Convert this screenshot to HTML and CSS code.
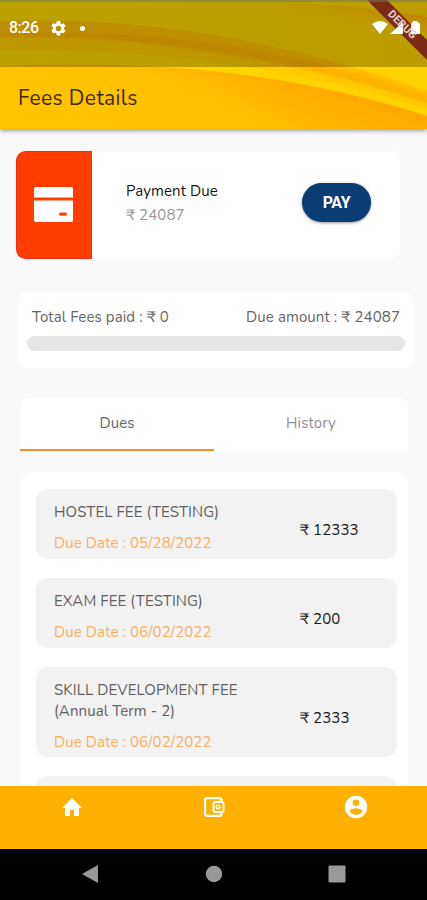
FILE: index.html
```html
<!DOCTYPE html>
<html lang="en">
<head>
<meta charset="utf-8">
<title>Fees Details</title>
<link rel="stylesheet" href="styles.css">
</head>
<body>
<div class="screen">
  <header class="header">
    <svg class="waves" viewBox="0 0 427 129" preserveAspectRatio="none">
      <defs>
        <linearGradient id="base" x1="0" y1="0" x2="1" y2="0"><stop offset="0" stop-color="#fbd800"/><stop offset="1" stop-color="#ffd200"/></linearGradient>
        <linearGradient id="low" x1="340" y1="86" x2="318" y2="145" gradientUnits="userSpaceOnUse"><stop offset="0" stop-color="#ffa800"/><stop offset="1" stop-color="#ffc000"/></linearGradient>
        <linearGradient id="low-left" x1="0" y1="0" x2="300" y2="0" gradientUnits="userSpaceOnUse"><stop offset="0" stop-color="#ffc400"/><stop offset="1" stop-color="#ffc400" stop-opacity="0"/></linearGradient>
        <linearGradient id="top" x1="360" y1="2" x2="355" y2="26" gradientUnits="userSpaceOnUse"><stop offset="0" stop-color="#ffb000"/><stop offset="1" stop-color="#ffd200" stop-opacity="0"/></linearGradient>
      </defs>
      <rect width="427" height="129" fill="url(#base)"/>
      <path d="M190 0Q330 0 427 17V36Q330 12 190 0Z" fill="url(#top)"/>
      <path d="M0 34Q110 32 214 48Q320 64 427 101V109Q320 76 214 62Q110 48 0 50Z" fill="#ffcb00"/>
      <path d="M0 21Q110 18 214 35Q320 53 427 91V104Q320 69 214 54Q110 36 0 38Z" fill="#ffbe00"/>
      <path d="M0 33Q110 29 214 44Q320 58 427 96V103Q320 67 214 51Q110 35 0 36Z" fill="#ffb400"/>
      <path d="M0 66Q105 61 213 71Q330 84 427 116V129H0Z" fill="url(#low)"/>
      <path d="M0 70Q105 65 213 75Q260 80 300 88V129H0Z" fill="url(#low-left)"/>
    </svg>
    <div class="debug"><span class="ribbon"></span></div>
    <div class="status">
      <span class="clock">8:26</span>
      <svg class="gear" viewBox="2 2 20 20"><path fill="#fff" d="M19.14 12.94c.04-.3.06-.61.06-.94s-.02-.64-.07-.94l2.03-1.58a.5.5 0 0 0 .12-.61l-1.92-3.32a.49.49 0 0 0-.59-.22l-2.39.96a7 7 0 0 0-1.62-.94l-.36-2.54A.48.48 0 0 0 13.92 2h-3.84a.48.48 0 0 0-.48.41l-.36 2.54c-.59.24-1.13.57-1.62.94l-2.39-.96a.49.49 0 0 0-.59.22L2.72 8.47a.48.48 0 0 0 .12.61l2.03 1.58a6 6 0 0 0 0 1.88l-2.03 1.58a.5.5 0 0 0-.12.61l1.92 3.32c.12.22.37.29.59.22l2.39-.96c.5.38 1.03.7 1.62.94l.36 2.54c.05.24.24.41.48.41h3.84c.24 0 .44-.17.47-.41l.36-2.54c.59-.24 1.13-.56 1.62-.94l2.39.96c.22.08.47 0 .59-.22l1.92-3.32a.48.48 0 0 0-.12-.61zM12 15.6a3.6 3.6 0 1 1 0-7.2 3.6 3.6 0 0 1 0 7.2z"/></svg>
      <i class="dot"></i>
      <svg class="signals" viewBox="0 0 48 16"><path fill="#fff" d="M0 4Q8-2 16 4L8 14ZM18 14 31 2V14ZM41 1h4v1h1q2 1 2 3v9h-9V5q0-2 2-3Z"/></svg>
    </div>
    <div class="debug"><span class="label">DEBUG</span></div>
    <h1 class="title">Fees Details</h1>
  </header>

  <main class="content">
    <section class="payment">
      <div class="pay-icon"><svg viewBox="0 0 39 35"><path fill="#fff" d="M2 0H37Q39 0 39 2V10.500H0V2Q0 0 2 0ZM0 13.500H39V33Q39 35 37 35H2Q0 35 0 33ZM26.500 25.500Q25 25.500 25 27T26.500 28.700H31.500Q33 28.700 33 27T31.500 25.500Z"/></svg></div>
      <div class="pay-text">
        <div class="pay-title">Payment Due</div>
        <div class="pay-sum">₹ 24087</div>
      </div>
      <button class="pay-btn">PAY</button>
    </section>

    <section class="summary">
      <div class="sums"><span class="paid">Total Fees paid : ₹ 0</span><span class="due">Due amount : ₹ 24087</span></div>
      <div class="bar"></div>
    </section>

    <nav class="tabs"><div class="tab active">Dues</div><div class="tab">History</div></nav>

    <section class="list">
      <article class="fee">
        <div class="info"><div class="name">HOSTEL FEE (TESTING)</div><div class="date">Due Date : 05/28/2022</div></div>
        <div class="amount">₹ 12333</div>
      </article>
      <article class="fee">
        <div class="info"><div class="name">EXAM FEE (TESTING)</div><div class="date">Due Date : 06/02/2022</div></div>
        <div class="amount">₹ 200</div>
      </article>
      <article class="fee tall">
        <div class="info"><div class="name">SKILL DEVELOPMENT FEE<br>(Annual Term - 2)</div><div class="date">Due Date : 06/02/2022</div></div>
        <div class="amount">₹ 2333</div>
      </article>
      <article class="fee"></article>
    </section>
  </main>

  <nav class="tabbar">
    <svg viewBox="0 0 24 24"><path fill="#fff" d="M10 21v-6h4v6h5v-8h3L12 3 2 13h3v8z"/></svg>
    <svg viewBox="0 0 24 24"><path fill="#fff" fill-rule="evenodd" d="M5 2H18Q20 2 20.500 4V6Q22.500 6.500 22.500 8.500V15.500Q22.500 17.500 20.500 18V20Q20.500 22 18 22H5Q2 22 2 19V5Q2 2 5 2ZM5 4.200Q4.200 4.200 4.200 5V19Q4.200 19.800 5 19.800H18.300V18H13Q10.500 18 10.500 15.500V8.500Q10.500 6 13 6H18.300V4.200ZM13.500 8Q12.500 8 12.500 9V15Q12.500 16 13.500 16H20.500V8ZM16 9.500A2.500 2.500 0 1 1 16 14.500A2.500 2.500 0 1 1 16 9.500ZM16 10.900A1.100 1.100 0 1 0 16 13.100A1.100 1.100 0 1 0 16 10.900Z"/></svg>
    <svg viewBox="0 0 24 24"><path fill="#fff" d="M12 .8a11.200 11.200 0 1 0 0 22.400A11.200 11.200 0 0 0 12 .8zM12 4.500a3.300 3.300 0 1 1 0 6.600 3.300 3.300 0 0 1 0-6.600zm0 15.200c-2.700 0-5.100-1.200-6.500-3.200.1-2.100 4.300-3.200 6.500-3.200s6.400 1.100 6.500 3.200a8 8 0 0 1-6.500 3.200z"/></svg>
  </nav>
  <nav class="sysbar">
    <svg viewBox="0 0 18 20"><path fill="#999" d="M17 1V19L1 10Z"/></svg>
    <svg viewBox="0 0 18 20"><circle cx="9" cy="10" r="8.200" fill="#999"/></svg>
    <svg viewBox="0 0 18 20"><rect x=".5" y="1.500" width="17" height="17" rx="1" fill="#999"/></svg>
  </nav>
</div>
</body>
</html>
```
FILE: styles.css
```css
* { box-sizing: border-box; }
body { margin: 0; font-family: Nunito, "Open Sans", "Noto Sans", sans-serif; font-size: 15px; font-weight: 400; letter-spacing: .11px; color: #666; }
.screen { width: 427px; height: 900px; overflow: hidden; display: flex; flex-direction: column; background: #fafafa; }

.header { position: relative; flex: none; height: 129px; box-shadow: 0 2px 4px rgba(60, 80, 100, .5); z-index: 1; }
.waves { position: absolute; inset: 0; width: 427px; height: 129px; }
.status { position: relative; height: 67px; padding: 0 7px 13px 9px; display: flex; align-items: center; background: rgba(0, 0, 0, .255); border-top: 2px solid rgba(110, 120, 110, .5); }
.clock { width: 31px; font: 500 16px/20px Roboto, sans-serif; letter-spacing: -.5px; color: #fff; }
.gear { width: 15px; height: 15px; margin-left: 11px; }
.dot { width: 5px; height: 5px; margin-left: 14px; border-radius: 50%; background: #fff; }
.signals { width: 48px; height: 16px; margin-left: auto; }
.title { position: relative; margin: 0; padding-left: 18px; font-size: 21px; font-weight: 400; line-height: 63px; letter-spacing: .38px; color: #3c2c00; }
.debug { position: absolute; top: 0; right: 0; width: 62px; height: 66px; overflow: hidden; }
.debug span { position: absolute; left: -23px; top: 18px; width: 120px; height: 14px; transform: rotate(45deg); font: 700 11px/14px Roboto, sans-serif; text-align: center; }
.ribbon { background: #a83a1c; }
.label { color: #e8cfd0; }

.content { flex: 1; min-height: 0; overflow: hidden; padding: 22px 14px 0 16px; }
.payment { width: 384px; height: 108px; display: flex; align-items: center; background: #fff; border-radius: 9px; overflow: hidden; }
.pay-icon { width: 76px; height: 108px; display: flex; align-items: center; justify-content: center; background: #ff3d00; border: 1px solid #f32b14; border-right: 0; border-radius: 9px 0 0 9px; }
.pay-icon svg { width: 39px; height: 35px; margin: -1px 2px 0 0; }
.pay-text { width: 176px; margin: -4px 0 0 34px; line-height: 24px; white-space: nowrap; }
.pay-title { color: #161616; }
.pay-sum { color: #999; }
.pay-btn { width: 69px; height: 39px; margin: -5px 0 0; padding: 0; border: 0; border-radius: 20px; background: #0b3d75; color: #fff; font: 700 16px/39px Roboto, sans-serif; letter-spacing: -.3px; box-shadow: 0 1px 3px rgba(0, 0, 0, .4); }

.summary { width: 396px; height: 76px; margin: 33px 0 0 2px; padding: 14px 9px 0; border-radius: 12px; background: #fff; }
.sums { display: flex; justify-content: space-between; padding: 0 5px; line-height: 22px; }
.bar { height: 15px; margin-top: 8px; border-radius: 8px; background: #e6e6e6; }

.tabs { display: flex; width: 388px; height: 53px; margin: 30px 0 0 4px; background: #fff; border-radius: 8px 8px 0 0; }
.tab { flex: 1; line-height: 51px; text-align: center; color: #909090; }
.tab.active { color: #666; border-bottom: 2px solid #f6902a; }

.list { width: 388px; margin: 21px 0 0 4px; padding: 17px 11px 40px 16px; border-radius: 12px; background: #fff; }
.fee { display: flex; align-items: center; height: 70px; margin-bottom: 19px; padding: 0 0 0 18px; border-radius: 12px; background: #f2f2f2; }
.fee.tall { height: 90px; }
.info { width: 246px; padding-top: 8px; white-space: nowrap; line-height: 21px; }
.name { color: #606060; }
.date { margin-top: 10px; color: #f9b066; }
.amount { padding-top: 11px; color: #161616; white-space: nowrap; }

.tabbar { flex: none; height: 63px; display: flex; justify-content: space-between; padding: 9px 59px 0 60px; background: #ffb000; }
.tabbar svg { width: 24px; height: 24px; }
.sysbar { flex: none; height: 51px; display: flex; justify-content: space-between; padding: 15px 81px 0; background: #000; }
.sysbar svg { width: 18px; height: 20px; }
```
